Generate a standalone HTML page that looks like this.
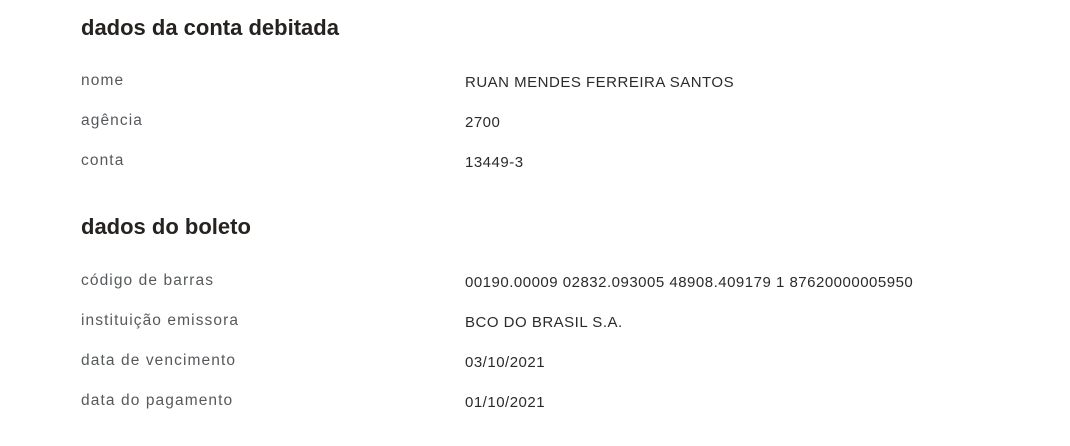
<!DOCTYPE html>
<html><head><meta charset="utf-8"><style>
body{margin:0;background:#fff;width:1070px;height:446px;overflow:hidden;font-family:"Liberation Sans",sans-serif;}
h2{position:absolute;left:81px;margin:0;font-size:22px;font-weight:bold;color:#252220;line-height:30px;letter-spacing:0}
.l{position:absolute;left:81px;font-size:15.5px;color:#56595c;line-height:20px;letter-spacing:1.1px}
.v{position:absolute;left:465px;font-size:15px;color:#2b2b2b;line-height:20px;letter-spacing:0.5px}
</style></head><body>
<h2 style="top:13px">dados da conta debitada</h2>
<div class="l" style="top:71px">nome</div><div class="v" style="top:73px">RUAN MENDES FERREIRA SANTOS</div>
<div class="l" style="top:111px">agência</div><div class="v" style="top:113px">2700</div>
<div class="l" style="top:151px">conta</div><div class="v" style="top:153px">13449-3</div>
<h2 style="top:212px">dados do boleto</h2>
<div class="l" style="top:271px">código de barras</div><div class="v" style="top:273px">00190.00009 02832.093005 48908.409179 1 87620000005950</div>
<div class="l" style="top:311px">instituição emissora</div><div class="v" style="top:313px">BCO DO BRASIL S.A.</div>
<div class="l" style="top:351px">data de vencimento</div><div class="v" style="top:353px">03/10/2021</div>
<div class="l" style="top:391px">data do pagamento</div><div class="v" style="top:393px">01/10/2021</div>
</body></html>
